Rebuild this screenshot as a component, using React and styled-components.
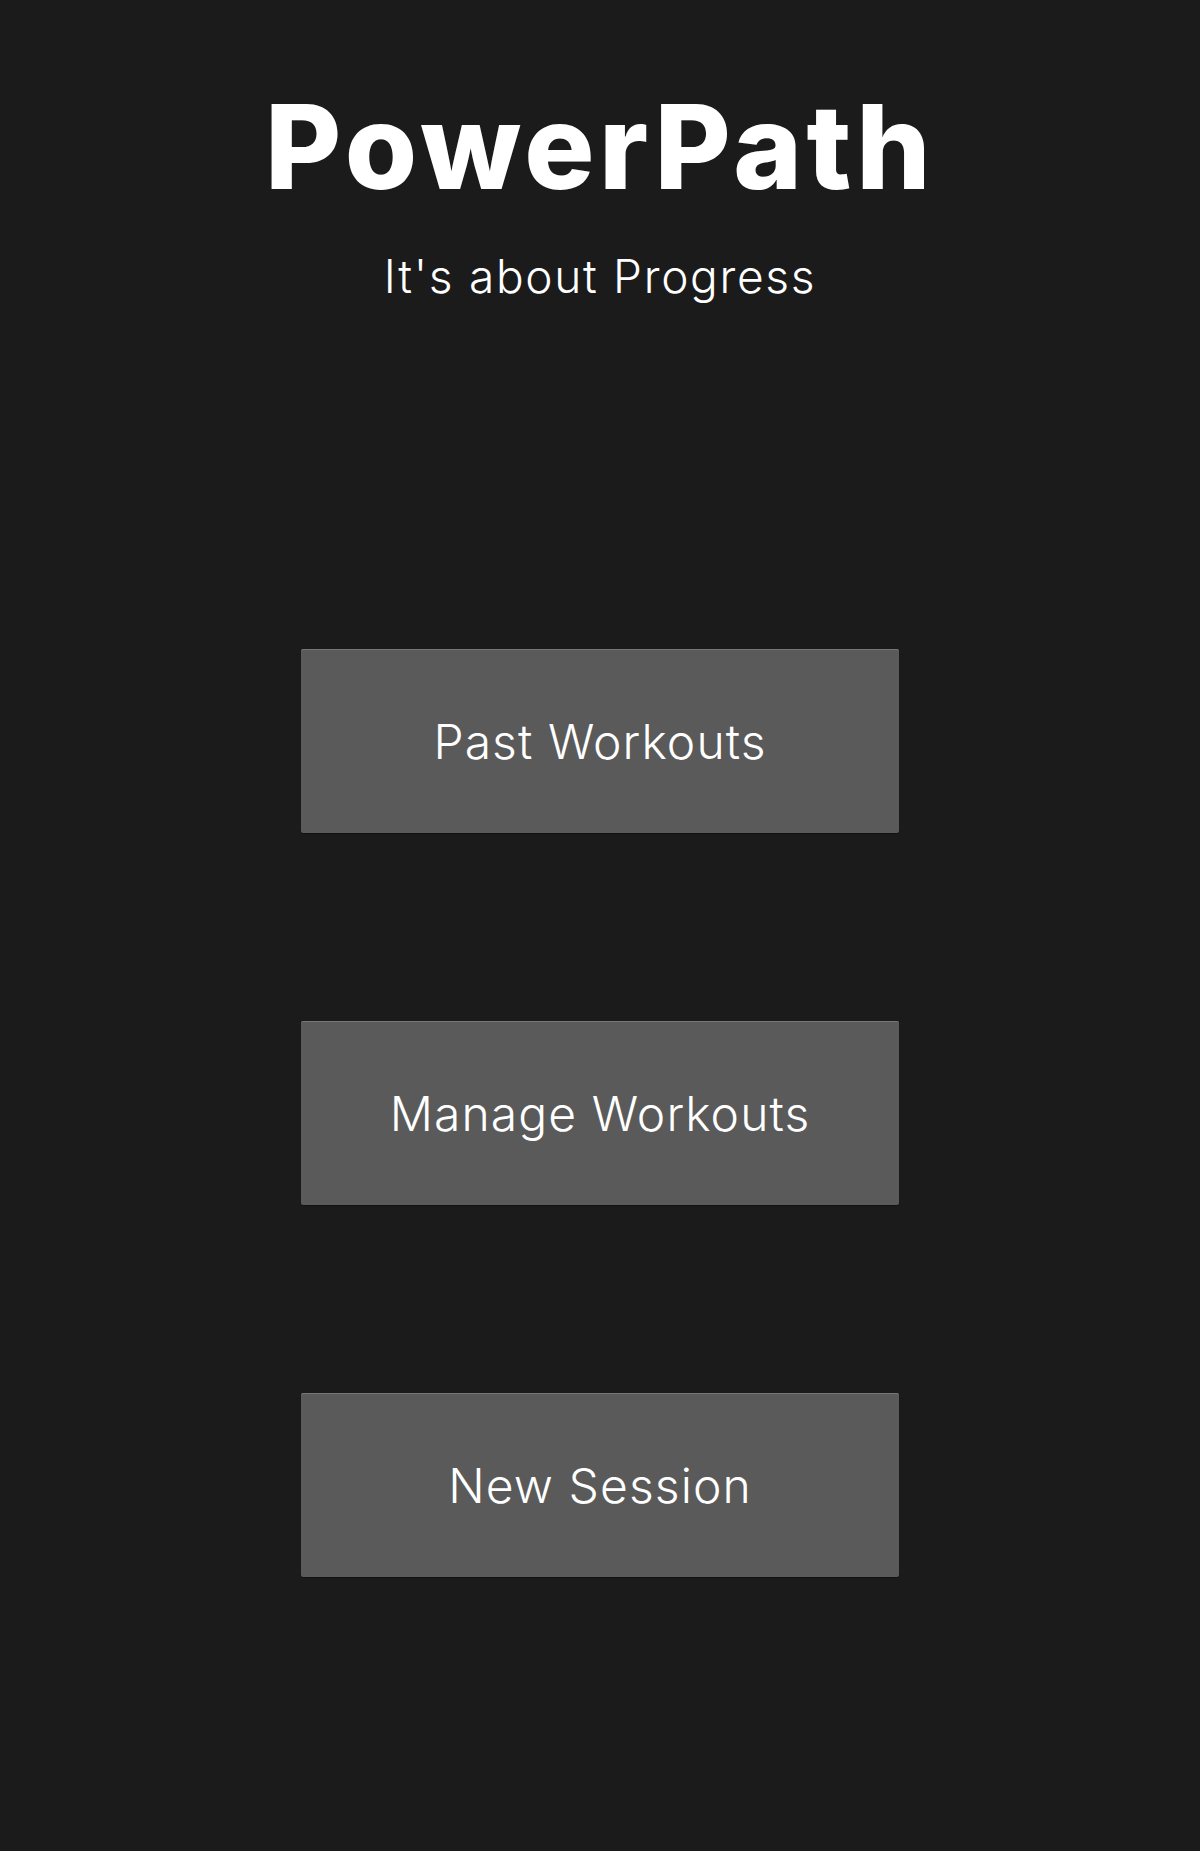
import React from "react";
import styled, { createGlobalStyle } from "styled-components";

const GlobalStyle = createGlobalStyle`
  html, body {
    margin: 0;
    padding: 0;
    background-color: #1b1b1b;
  }

  body {
    font-family: "Inter", "Liberation Sans", sans-serif;
    color: white;
  }
`;

const menuItems = ["Past Workouts", "Manage Workouts", "New Session"];

const App = () => {
  return (
    <>
      <GlobalStyle />
      <Page>
        <Header>
          <Title>PowerPath</Title>
          <Tagline>It's about Progress</Tagline>
        </Header>

        <Menu>
          {menuItems.map((item) => (
            <MenuButton key={item} type="button">
              {item}
            </MenuButton>
          ))}
        </Menu>
      </Page>
    </>
  );
};

const Page = styled.div`
  min-height: 1851px;
  display: flex;
  flex-direction: column;
  align-items: center;
  background-color: #1b1b1b;
`;

const Header = styled.header`
  display: flex;
  flex-direction: column;
  align-items: center;
  padding-top: 88px;
`;

const Title = styled.h1`
  margin: 0;
  font-size: 117px;
  line-height: 1;
  font-weight: 800;
  letter-spacing: 4.5px;
  color: white;
`;

const Tagline = styled.p`
  margin: 48px 0 0;
  font-size: 46px;
  line-height: 1;
  font-weight: 300;
  letter-spacing: 1.7px;
  color: white;
`;

const Menu = styled.nav`
  display: flex;
  flex-direction: column;
  gap: 188px;
  margin-top: 350px;
`;

const MenuButton = styled.button`
  width: 598px;
  height: 184px;
  border: none;
  border-radius: 2px;
  background-color: #5a5a5a;
  box-shadow: inset 0 1px 0 rgba(255, 255, 255, 0.18), 0 1px 1px rgba(0, 0, 0, 0.35);
  color: white;
  font-family: "Inter", "Liberation Sans", sans-serif;
  font-size: 48px;
  font-weight: 300;
  letter-spacing: 1.1px;
  cursor: pointer;
`;

export default App;
